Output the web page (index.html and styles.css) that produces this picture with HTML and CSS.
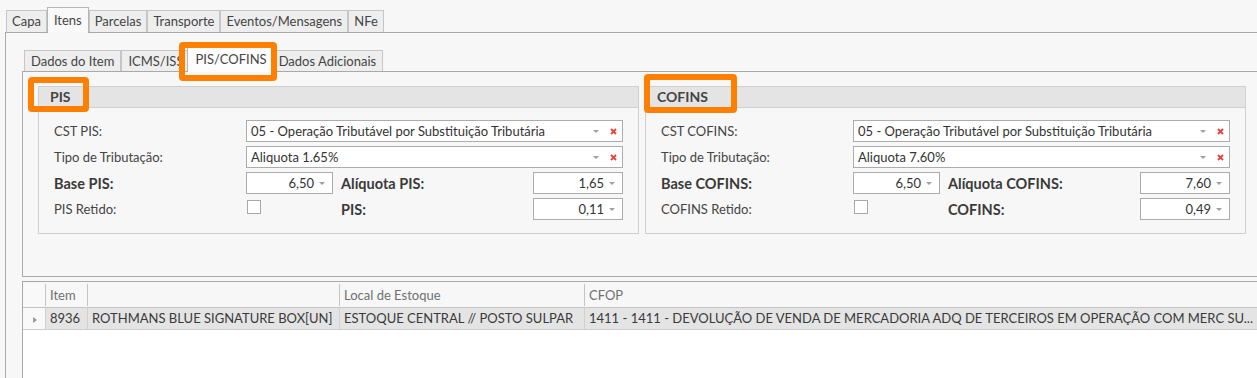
FILE: index.html
```html
<!DOCTYPE html>
<html lang="pt-BR">
<head>
    <meta charset="UTF-8">
    <title>Itens - PIS/COFINS</title>
    <link rel="stylesheet" href="styles.css">
</head>
<body>
    <div class="tabs main-tabs">
        <div class="tab">Capa</div>
        <div class="tab active">Itens</div>
        <div class="tab">Parcelas</div>
        <div class="tab">Transporte</div>
        <div class="tab">Eventos/Mensagens</div>
        <div class="tab">NFe</div>
    </div>
    <div class="outer">
        <div class="tabs sub-tabs">
            <div class="tab">Dados do Item</div>
            <div class="tab">ICMS/ISS</div>
            <div class="tab active">PIS/COFINS</div>
            <div class="tab">Dados Adicionais</div>
        </div>
        <div class="inner">
            <div class="groups">
                <section class="group">
                    <div class="group-head">PIS</div>
                    <div class="group-body">
                        <div class="row">
                            <span class="lbl">CST PIS:</span>
                            <div class="field combo wide"><span class="val">05 - Operação Tributável por Substituição Tributária</span><span class="arrow"></span><svg class="clear" viewBox="0 0 7 7"><path d="M1 1L6 6M6 1L1 6"/></svg></div>
                        </div>
                        <div class="row">
                            <span class="lbl">Tipo de Tributação:</span>
                            <div class="field combo wide"><span class="val">Aliquota 1.65%</span><span class="arrow"></span><svg class="clear" viewBox="0 0 7 7"><path d="M1 1L6 6M6 1L1 6"/></svg></div>
                        </div>
                        <div class="row">
                            <span class="lbl b">Base PIS:</span>
                            <div class="field num"><span class="val">6,50</span><span class="arrow"></span></div>
                            <span class="lbl b mid">Alíquota PIS:</span>
                            <div class="field num"><span class="val">1,65</span><span class="arrow"></span></div>
                        </div>
                        <div class="row">
                            <span class="lbl">PIS Retido:</span>
                            <div class="check-cell"><span class="check"></span></div>
                            <span class="lbl b mid">PIS:</span>
                            <div class="field num"><span class="val">0,11</span><span class="arrow"></span></div>
                        </div>
                    </div>
                </section>
                <section class="group">
                    <div class="group-head">COFINS</div>
                    <div class="group-body">
                        <div class="row">
                            <span class="lbl">CST COFINS:</span>
                            <div class="field combo wide"><span class="val">05 - Operação Tributável por Substituição Tributária</span><span class="arrow"></span><svg class="clear" viewBox="0 0 7 7"><path d="M1 1L6 6M6 1L1 6"/></svg></div>
                        </div>
                        <div class="row">
                            <span class="lbl">Tipo de Tributação:</span>
                            <div class="field combo wide"><span class="val">Aliquota 7.60%</span><span class="arrow"></span><svg class="clear" viewBox="0 0 7 7"><path d="M1 1L6 6M6 1L1 6"/></svg></div>
                        </div>
                        <div class="row">
                            <span class="lbl b">Base COFINS:</span>
                            <div class="field num"><span class="val">6,50</span><span class="arrow"></span></div>
                            <span class="lbl b mid">Alíquota COFINS:</span>
                            <div class="field num"><span class="val">7,60</span><span class="arrow"></span></div>
                        </div>
                        <div class="row">
                            <span class="lbl">COFINS Retido:</span>
                            <div class="check-cell"><span class="check"></span></div>
                            <span class="lbl b mid">COFINS:</span>
                            <div class="field num"><span class="val">0,49</span><span class="arrow"></span></div>
                        </div>
                    </div>
                </section>
            </div>
        </div>
        <div class="grid">
            <div class="grid-head">
                <div class="cell c-ind"></div>
                <div class="cell c-item">Item</div>
                <div class="cell c-desc"></div>
                <div class="cell c-local">Local de Estoque</div>
                <div class="cell c-cfop">CFOP</div>
            </div>
            <div class="grid-row">
                <div class="cell c-ind"><span class="row-mark"></span></div>
                <div class="cell c-item">8936</div>
                <div class="cell c-desc">ROTHMANS BLUE SIGNATURE BOX[UN]</div>
                <div class="cell c-local">ESTOQUE CENTRAL // POSTO SULPAR</div>
                <div class="cell c-cfop">1411 - 1411 - DEVOLUÇÃO DE VENDA DE MERCADORIA ADQ DE TERCEIROS EM OPERAÇÃO COM MERC SU...</div>
            </div>
        </div>
    </div>

    <!-- destaques -->
    <div class="mark mark-tab"></div>
    <div class="mark mark-pis"></div>
    <div class="mark mark-cofins"></div>
</body>
</html>
```

FILE: styles.css
```css
html, body {
    margin: 0;
    height: 378px;
    overflow: hidden;
}
body {
    background: #f7f7f7;
    font-family: Lato, "Liberation Sans", sans-serif;
    font-size: 13px;
    color: #444;
    position: relative;
}

/* abas */
.tabs {
    display: flex;
    align-items: flex-end;
}
.main-tabs {
    height: 24px;
    padding: 8px 0 0 6px;
}
.tab {
    box-sizing: border-box;
    height: 22px;
    line-height: 20px;
    padding: 0 5px;
    border: 1px solid #c6c6c6;
    border-bottom: none;
    background: #eeeeee;
    color: #444;
    white-space: nowrap;
}
.tab.active {
    height: 26px;
    line-height: 24px;
    padding: 0 6px;
    margin-bottom: -1px;
    background: #f9f9f9;
    border-color: #b5b5b5;
    position: relative;
    z-index: 1;
}
.outer {
    margin-left: 5px;
    border-top: 1px solid #a9a9a9;
    border-left: 1px solid #a9a9a9;
    padding: 15px 0 0 16px;
    height: 400px;
}
.sub-tabs {
    height: 23px;
    padding-left: 2px;
}
.sub-tabs .tab {
    height: 21px;
    line-height: 20px;
    padding: 0 6px;
}
.sub-tabs .tab.active {
    height: 25px;
    line-height: 22px;
    margin: 0 -3px -1px -3px;
    padding: 0 7px;
    background: #fdfdfd;
}

.inner {
    box-sizing: border-box;
    height: 206px;
    border-top: 1px solid #a9a9a9;
    border-left: 1px solid #a9a9a9;
    border-bottom: 1px solid #a9a9a9;
    padding: 14px 0 0 15px;
}
.groups {
    display: flex;
    gap: 6px;
}
.group {
    box-sizing: border-box;
    width: 601px;
    border: 1px solid #d0d0d0;
}
.group-head {
    height: 20px;
    line-height: 20px;
    padding-left: 11px;
    background: #e4e4e4;
    border-bottom: 1px solid #d0d0d0;
    font-weight: bold;
    font-size: 14px;
    color: #444;
}
.group-body {
    padding: 12px 15px 13px 15px;
    display: flex;
    flex-direction: column;
    gap: 4px;
}
.row {
    display: grid;
    grid-template-columns: 192px 87px 1fr 90px;
    height: 22px;
    align-items: center;
}
.lbl {
    color: #444;
    white-space: nowrap;
}
.lbl.b {
    font-weight: bold;
    font-size: 14.5px;
    color: #3a3a3a;
}
.lbl.mid {
    padding-left: 8px;
}
.field {
    box-sizing: border-box;
    height: 22px;
    border: 1px solid #acacac;
    background: #fff;
    display: flex;
    align-items: center;
    color: #333;
    white-space: nowrap;
    overflow: hidden;
}
.field.wide {
    grid-column: 2 / 5;
}
.field .val {
    flex: 1;
    padding-left: 4px;
}
.field.num .val {
    text-align: right;
    padding-right: 5px;
}
.arrow {
    width: 0;
    height: 0;
    border-left: 3px solid transparent;
    border-right: 3px solid transparent;
    border-top: 3px solid #a0a0a0;
    margin-right: 7px;
}
.combo .arrow {
    margin-right: 11px;
}
.clear {
    width: 7px;
    height: 7px;
    margin-right: 5px;
    stroke: #e8403a;
    stroke-width: 1.8;
    fill: none;
}
.check-cell {
    height: 22px;
    display: flex;
    align-items: flex-start;
    padding-top: 2px;
    box-sizing: border-box;
}
.check {
    box-sizing: border-box;
    width: 14px;
    height: 14px;
    margin-left: 1px;
    border: 1px solid #a8a8a8;
    background: #fff;
}

/* grade */
.grid {
    margin-top: 4px;
    border-top: 1px solid #a9a9a9;
    border-left: 1px solid #a9a9a9;
    background: #fff;
    height: 200px;
}
.grid-head, .grid-row {
    display: flex;
    white-space: nowrap;
}
.grid-head {
    height: 25px;
    align-items: center;
    background: #f7f7f7;
    border-bottom: 1px solid #c4c4c4;
    color: #707070;
}
.grid-row {
    height: 21px;
    align-items: stretch;
    border-bottom: 1px solid #cdcdcd;
    color: #3a3a3a;
}
.cell {
    box-sizing: border-box;
    padding-left: 4px;
    overflow: hidden;
}
.grid-head .cell {
    height: 22px;
    line-height: 22px;
    border-left: 1px solid #c4c4c4;
}
.grid-row .cell {
    line-height: 21px;
    border-left: 1px solid #d0d0d0;
    background: #e4e4e4;
}
.c-ind { width: 22px; }
.c-item { width: 42px; }
.c-desc { width: 252px; }
.c-local { width: 245px; }
.c-cfop { flex: 1; }
.grid-head .c-ind,
.grid-row .c-ind {
    border-left: none;
    background: #f9f9f9;
}
.row-mark {
    display: inline-block;
    width: 0;
    height: 0;
    margin-left: 6px;
    border-top: 3px solid transparent;
    border-bottom: 3px solid transparent;
    border-left: 4px solid #9a9a9a;
    vertical-align: middle;
}

/* destaques laranja */
.mark {
    position: absolute;
    box-sizing: border-box;
    border: 6px solid #ff8000;
    border-radius: 4px;
    z-index: 5;
}
.mark-tab { left: 179px; top: 42px; width: 98px; height: 39px; }
.mark-pis { left: 28px; top: 77px; width: 61px; height: 35px; }
.mark-cofins { left: 644px; top: 74px; width: 93px; height: 39px; }
```
